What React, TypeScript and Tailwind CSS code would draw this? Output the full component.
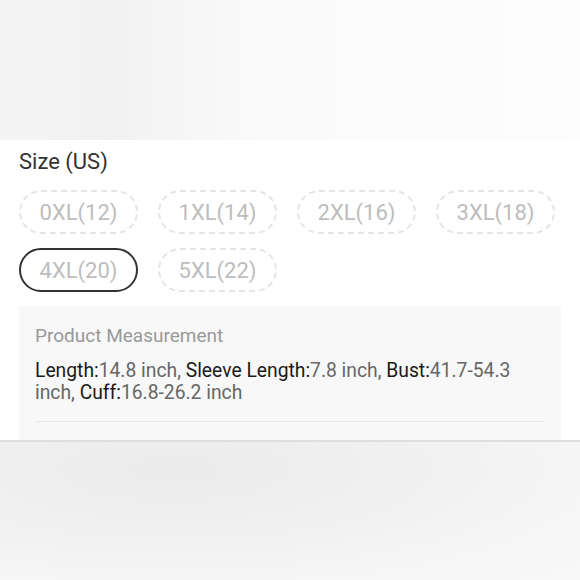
const sizes = ["0XL(12)", "1XL(14)", "2XL(16)", "3XL(18)", "4XL(20)", "5XL(22)"];
const selected = "4XL(20)";

const measurements = [
  { label: "Length", value: "14.8 inch" },
  { label: "Sleeve Length", value: "7.8 inch" },
  { label: "Bust", value: "41.7-54.3 inch" },
  { label: "Cuff", value: "16.8-26.2 inch" },
];

export default function App() {
  return (
    <div className="flex h-[580px] w-[580px] flex-col overflow-hidden bg-white font-['Roboto',sans-serif]">
      <div className="h-[140px] shrink-0 bg-[linear-gradient(90deg,#f4f4f4_0%,#f2f2f2_20%,#fafafa_45%,#fdfdfd_100%)]" />

      <div className="shrink-0 bg-white px-[19px] pt-[8px]">
        <h2 className="text-[22px] leading-[28px] text-[#333]">Size (US)</h2>

        <div className="mt-[14px] flex flex-wrap gap-x-[20px] gap-y-[14px]">
          {sizes.map((s) =>
            s === selected ? (
              <button
                key={s}
                className="flex h-[44px] w-[119px] items-center justify-center rounded-full border-2 border-[#333] text-[22px] text-[#bdbdbd]"
              >
                {s}
              </button>
            ) : (
              <button
                key={s}
                className="flex h-[44px] w-[119px] items-center justify-center rounded-full border-2 border-dashed border-[#e4e4e4] text-[22px] text-[#bdbdbd]"
              >
                {s}
              </button>
            )
          )}
        </div>

        <div className="mt-[14px] w-[542px] bg-[#f8f8f8] px-[16px] pt-[18px] pb-[18px]">
          <p className="text-[19px] leading-[24px] text-[#999]">Product Measurement</p>
          <p className="mt-[12px] text-[19.3px] leading-[22px] text-[#666]">
            {measurements.map((m, i) => (
              <span key={m.label}>
                <span className="text-[#1a1a1a]">{m.label}:</span>
                {m.value}
                {i < measurements.length - 1 ? ", " : ""}
              </span>
            ))}
          </p>
          <div className="mt-[17px] h-px bg-[#e8e8e8]" />
        </div>
      </div>

      <div className="flex-1 border-t-2 border-[#dedede] bg-[radial-gradient(ellipse_at_30%_20%,#ebebeb_0%,#f1f1f1_45%,#f6f6f6_75%,#f8f8f8_100%)]" />
    </div>
  );
}
